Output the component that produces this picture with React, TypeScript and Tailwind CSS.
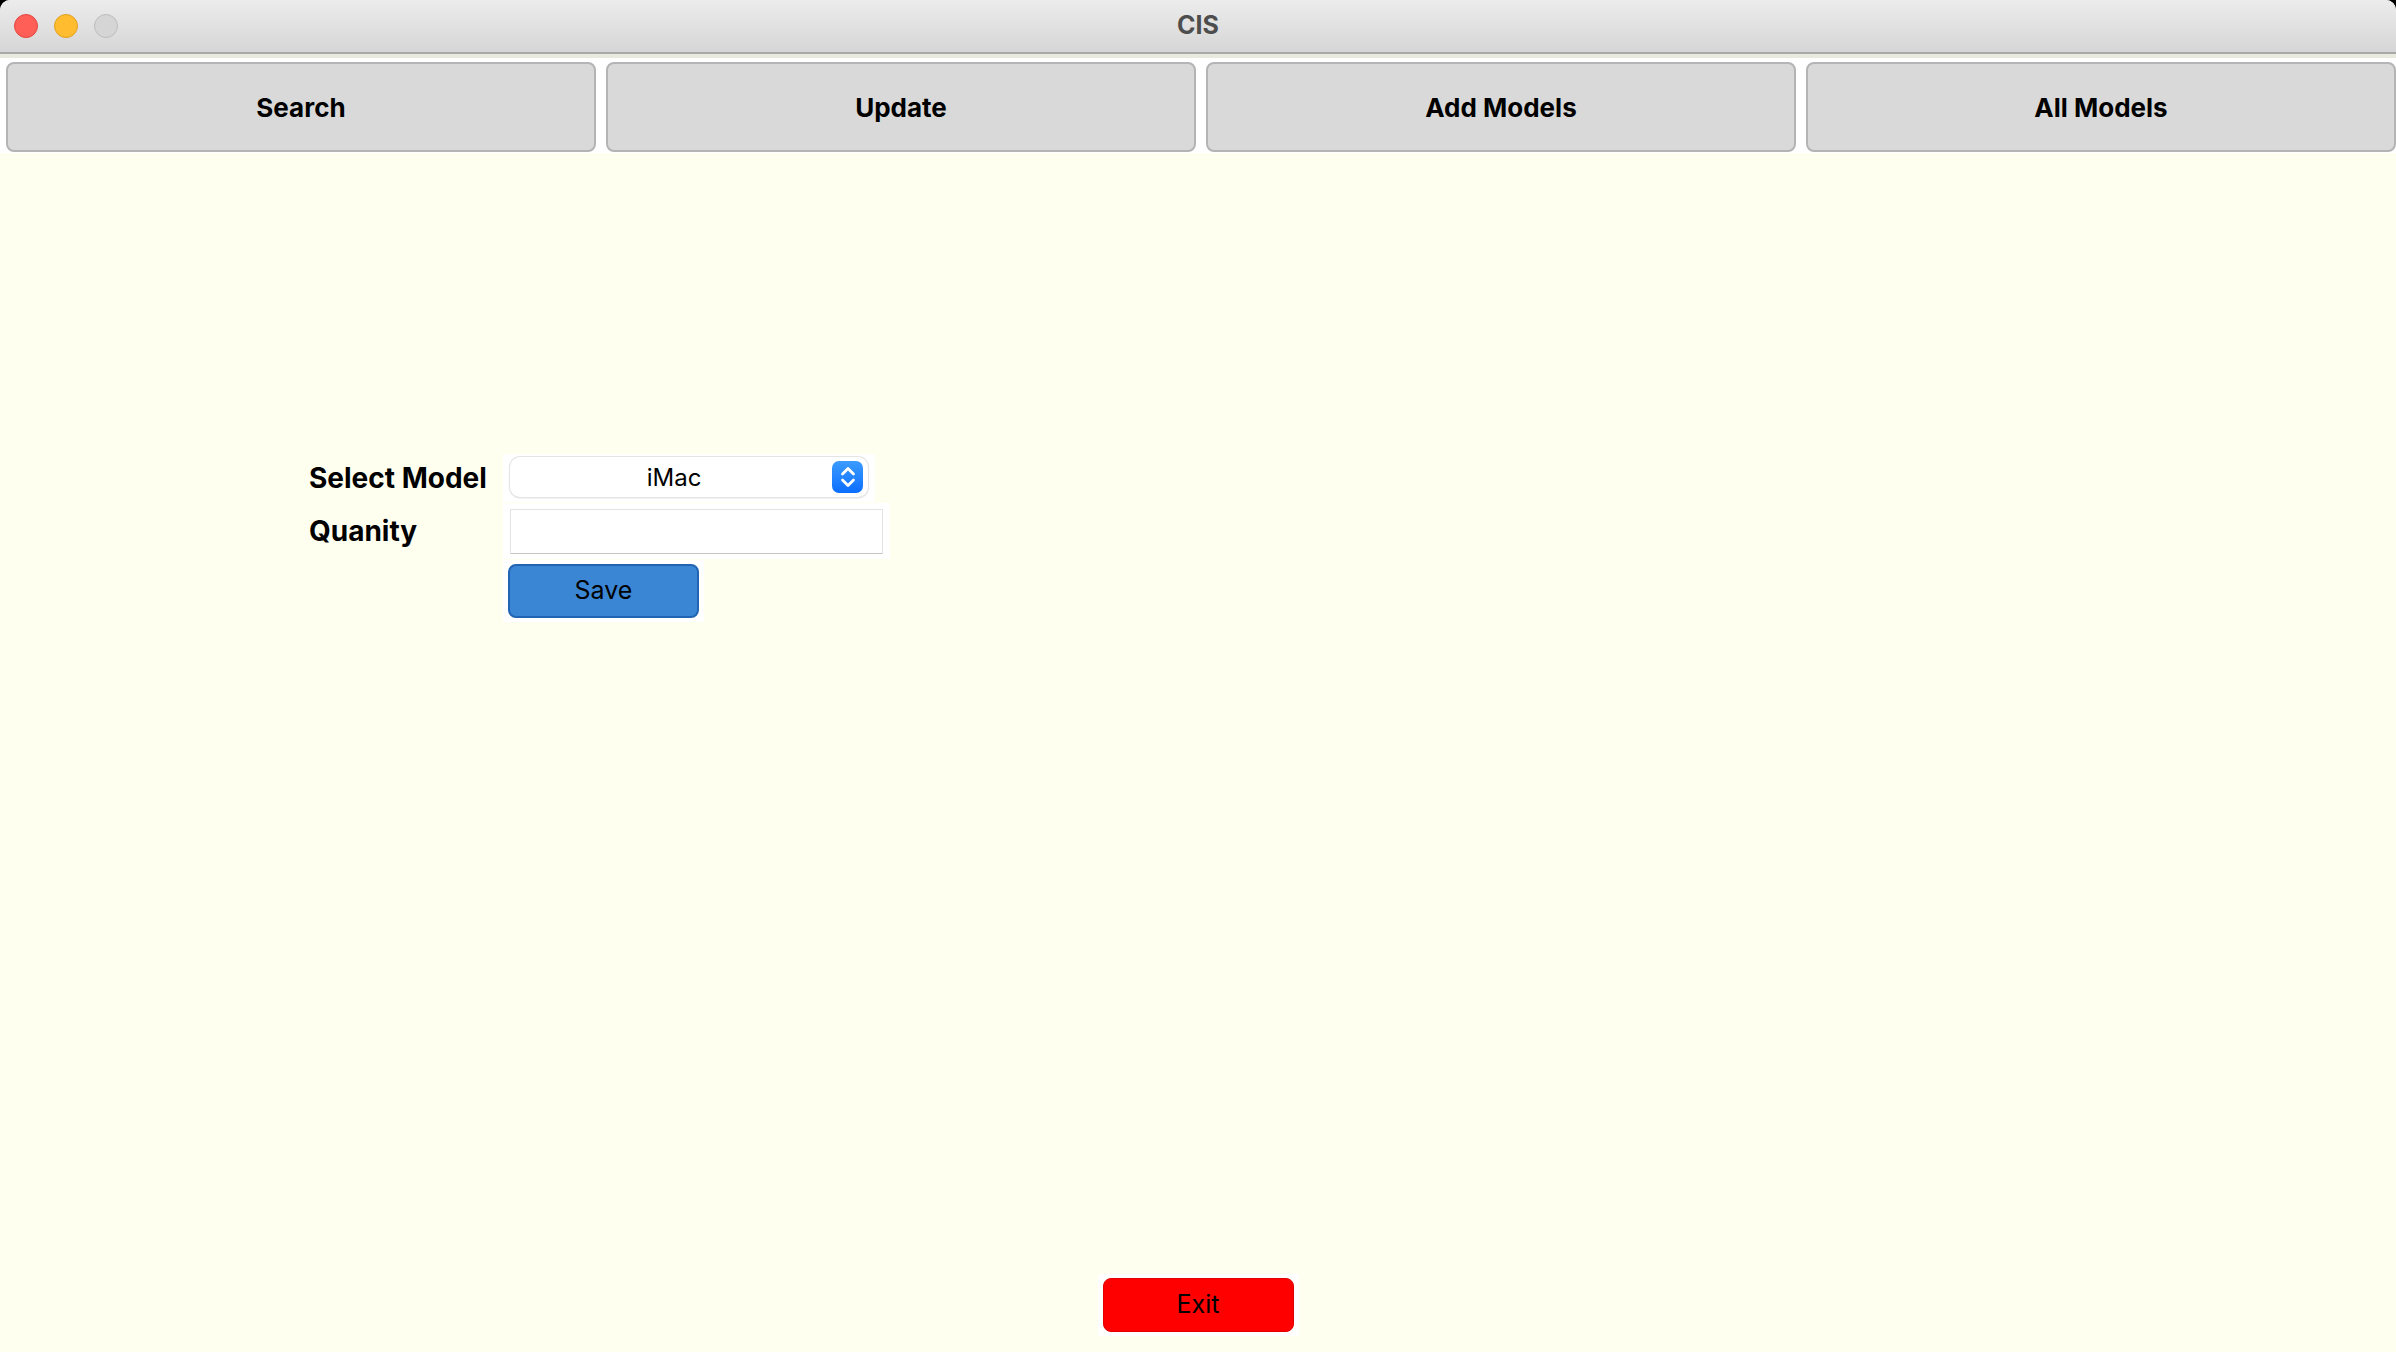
import { ReactNode } from 'react'

const tabs = ['Search', 'Update', 'Add Models', 'All Models']

function TrafficLight({ className }: { className: string }) {
  return <span className={`block h-[24px] w-[24px] rounded-full border ${className}`} />
}

function Stepper() {
  return (
    <span className="flex h-[32px] w-[31px] items-center justify-center rounded-[7px] bg-gradient-to-b from-[#3b9bff] to-[#0a6dff]">
      <svg width="20" height="26" viewBox="0 0 20 26" fill="none" stroke="white" strokeWidth="2.8" strokeLinecap="round" strokeLinejoin="round">
        <path d="M4.5 10 L10 4.5 L15.5 10" />
        <path d="M4.5 16 L10 21.5 L15.5 16" />
      </svg>
    </span>
  )
}

function Row({ label, children }: { label: string; children: ReactNode }) {
  return (
    <div className="flex items-center">
      <span className="w-[194px] shrink-0 text-[28px] font-bold text-black">{label}</span>
      {children}
    </div>
  )
}

export default function App() {
  return (
    <div className="h-[1352px] w-[2396px] overflow-hidden bg-black" style={{ fontFamily: 'Inter, "Noto Sans", sans-serif' }}>
      <div className="flex h-full flex-col overflow-hidden rounded-t-[10px] bg-[#fffff0]">
        {/* Title bar */}
        <div className="relative flex h-[52px] shrink-0 items-center justify-center bg-gradient-to-b from-[#ececec] to-[#d6d6d6]">
          <div className="absolute left-[14px] top-[14px] flex gap-[16px]">
            <TrafficLight className="border-[#e2463f] bg-[#ff5f57]" />
            <TrafficLight className="border-[#dfa023] bg-[#febc2e]" />
            <TrafficLight className="border-[#bdbdbd] bg-[#d5d5d5]" />
          </div>
          <span className="text-[25px] font-bold text-[#4d4d4d]">CIS</span>
        </div>
        <div className="h-[2px] shrink-0 bg-[#a9a9a9]" />
        <div className="h-[4px] shrink-0 bg-[#e9e9dd]" />

        {/* Tabs */}
        <div className="flex shrink-0 gap-[10px] bg-white pb-[1px] pl-[6px] pt-[4px]">
          {tabs.map(t => (
            <button
              key={t}
              className="flex h-[90px] w-[590px] shrink-0 items-center justify-center rounded-[8px] border-2 border-[#b4b4b4] bg-[#d9d9d9] text-[26px] font-bold text-black"
            >
              {t}
            </button>
          ))}
        </div>

        {/* Content */}
        <div className="flex flex-1 flex-col">
          <div className="flex flex-col gap-[1px] pl-[309px] pt-[301px]">
            <Row label="Select Model">
              <div className="bg-white px-[7px] pb-[5px] pt-[3px]">
                <div className="flex h-[40px] w-[358px] items-center rounded-[10px] bg-white pl-[6px] pr-[5px] shadow-[0_0_0_1px_#e4e4e4,0_1px_2px_rgba(0,0,0,0.18)]">
                  <span className="flex-1 pt-[2px] text-center text-[24px] text-black">iMac</span>
                  <Stepper />
                </div>
              </div>
            </Row>
            <Row label="Quanity">
              <div className="bg-white px-[7px] pb-[5px] pt-[6px]">
                <input className="block h-[45px] w-[373px] border border-[#e3e3e3] border-b-[#c6c6c6] bg-white outline-none" />
              </div>
            </Row>
            <div className="flex">
              <div className="ml-[194px] bg-white px-[5px] py-[4px]">
                <button className="flex h-[54px] w-[191px] items-center justify-center rounded-[8px] border-2 border-[#2164b4] bg-[#3b86d4] text-[25px] text-black">
                  Save
                </button>
              </div>
            </div>
          </div>

          <div className="flex-1" />

          <div className="mb-[16px] flex justify-center">
            <div className="bg-white px-[5px] py-[4px]">
              <button className="flex h-[54px] w-[191px] items-center justify-center rounded-[8px] border border-[#e00000] bg-[#ff0000] text-[25px] text-black">
                Exit
              </button>
            </div>
          </div>
        </div>
      </div>
    </div>
  )
}
